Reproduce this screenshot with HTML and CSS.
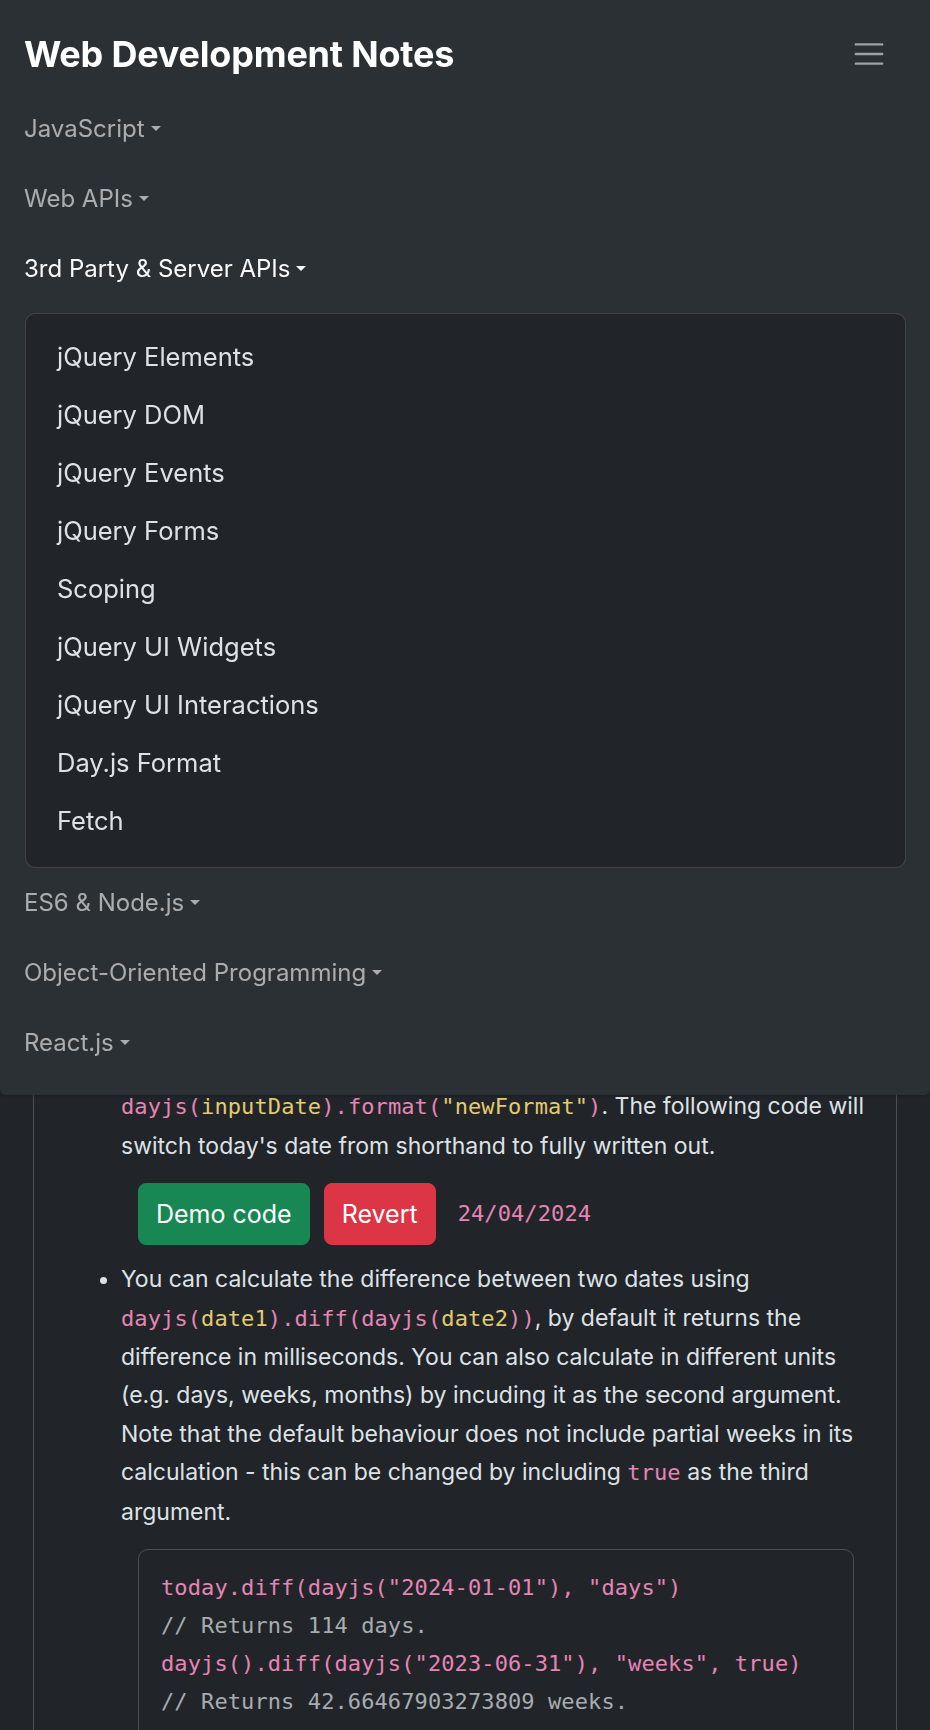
FILE: index.html
```html
<!DOCTYPE html>
<html lang="en">
<head>
<meta charset="utf-8">
<title>Web Development Notes</title>
<link rel="stylesheet" href="styles.css">
</head>
<body>
<nav class="navbar">
  <div class="brand-row">
    <a class="brand" href="#">Web Development Notes</a>
    <button class="toggler" type="button" aria-label="Toggle navigation">
      <svg width="36" height="36" viewBox="0 0 30 30" aria-hidden="true"><path d="M4 7h22M4 15h22M4 23h22" stroke="rgba(255,255,255,0.55)" stroke-width="2" stroke-linecap="round" fill="none"/></svg>
    </button>
  </div>
  <ul class="nav-list">
    <li><a class="nav-link" href="#">JavaScript<span class="caret"></span></a></li>
    <li><a class="nav-link" href="#">Web APIs<span class="caret"></span></a></li>
    <li class="open">
      <a class="nav-link active" href="#">3rd Party &amp; Server APIs<span class="caret"></span></a>
      <ul class="dropdown">
        <li><a class="dropdown-item" href="#">jQuery Elements</a></li>
        <li><a class="dropdown-item" href="#">jQuery DOM</a></li>
        <li><a class="dropdown-item" href="#">jQuery Events</a></li>
        <li><a class="dropdown-item" href="#">jQuery Forms</a></li>
        <li><a class="dropdown-item" href="#">Scoping</a></li>
        <li><a class="dropdown-item" href="#">jQuery UI Widgets</a></li>
        <li><a class="dropdown-item" href="#">jQuery UI Interactions</a></li>
        <li><a class="dropdown-item" href="#">Day.js Format</a></li>
        <li><a class="dropdown-item" href="#">Fetch</a></li>
      </ul>
    </li>
    <li><a class="nav-link" href="#">ES6 &amp; Node.js<span class="caret"></span></a></li>
    <li><a class="nav-link" href="#">Object-Oriented Programming<span class="caret"></span></a></li>
    <li><a class="nav-link" href="#">React.js<span class="caret"></span></a></li>
  </ul>
</nav>

<main class="main">
  <section class="card">
    <ul class="notes">
      <li>You can change the format of a date by using
        <code class="c"><span class="p">dayjs(</span><span class="y">inputDate</span><span class="p">).format(</span><span class="y">"newFormat"</span><span class="p">)</span></code>. The following code will switch today's date from shorthand to fully written out.
        <div class="demo-row">
          <button class="btn btn-green" type="button">Demo code</button>
          <button class="btn btn-red" type="button">Revert</button>
          <span class="c date">24/04/2024</span>
        </div>
      </li>
      <li>You can calculate the difference between two dates using
        <code class="c"><span class="p">dayjs(</span><span class="y">date1</span><span class="p">).diff(dayjs(</span><span class="y">date2</span><span class="p">))</span></code>, by default it returns the difference in milliseconds. You can also calculate in different units (e.g. days, weeks, months) by incuding it as the second argument. Note that the default behaviour does not include partial weeks in its calculation - this can be changed by including <code class="c p">true</code> as the third argument.
        <pre class="code-block"><code><span class="p">today.diff(dayjs("2024-01-01"), "days")</span>
<span class="cm">// Returns 114 days.</span>
<span class="p">dayjs().diff(dayjs("2023-06-31"), "weeks", true)</span>
<span class="cm">// Returns 42.66467903273809 weeks.</span></code></pre>
      </li>
    </ul>
  </section>
</main>
</body>
</html>
```

FILE: styles.css
```css
* { box-sizing: border-box; }

html, body {
  margin: 0;
  padding: 0;
}

body {
  background: #212529;
  color: #dee2e6;
  font-family: Inter, "Noto Sans", "Liberation Sans", sans-serif;
  font-size: 23px;
  line-height: 38.4px;
  overflow: hidden;
}

a { text-decoration: none; }

/* ---------- navbar ---------- */
.navbar {
  position: fixed;
  top: 0;
  left: 0;
  right: 0;
  z-index: 10;
  background: #2b3035;
  border-radius: 0 0 6px 6px;
  padding: 14px 24px 17px 24px;
  box-shadow: 0 1px 3px rgba(0, 0, 0, 0.2);
}

.brand-row {
  display: flex;
  align-items: center;
  justify-content: space-between;
  height: 80px;
}

.brand {
  color: #fff;
  font-size: 36px;
  font-weight: 700;
  letter-spacing: -0.2px;
  line-height: 48px;
}

.toggler {
  background: transparent;
  border: 1px solid transparent;
  padding: 0 18px 0 0;
  margin: 0;
  display: flex;
  align-items: center;
  cursor: pointer;
}

.toggler svg { display: block; }

.nav-list {
  list-style: none;
  margin: 0;
  padding: 0;
}

.nav-link {
  display: block;
  height: 70px;
  line-height: 70px;
  font-size: 24px;
  color: rgba(255, 255, 255, 0.6);
}

.nav-link.active { color: #f8f9fa; }

.caret {
  display: inline-block;
  margin-left: 6px;
  vertical-align: 0.24em;
  border-top: 5.5px solid currentColor;
  border-left: 5.5px solid transparent;
  border-right: 5.5px solid transparent;
}

.dropdown {
  list-style: none;
  margin: 9px 0 0 1px;
  padding: 14px 0 17px;
  background: #212529;
  border: 1px solid rgba(255, 255, 255, 0.15);
  border-radius: 10px;
}

.dropdown-item {
  display: block;
  height: 58px;
  line-height: 58px;
  padding: 0 31px;
  font-size: 25.5px;
  color: #dee2e6;
}

/* ---------- content ---------- */
.main {
  padding: 1031px 33px 0;
}

.card {
  border: 1px solid #495057;
  border-radius: 10px;
  padding: 17px 24px 24px;
}

.notes {
  margin: 0;
  padding-left: 63px;
}

.notes > li { padding-right: 4px; }

.c {
  font-family: "DejaVu Sans Mono", "Liberation Mono", monospace;
  font-size: 22px;
  letter-spacing: 0.1px;
}

.p { color: #e685b5; }
.y { color: #e3cb6e; }
.cm { color: #a7acb1; }

.demo-row {
  display: flex;
  align-items: center;
  gap: 14px;
  margin: 18px 0 15px 17px;
}

.btn {
  font-family: Inter, "Noto Sans", "Liberation Sans", sans-serif;
  font-size: 25px;
  line-height: 36px;
  padding: 12px 17px;
  color: #fff;
  border: 1px solid transparent;
  border-radius: 8px;
  cursor: pointer;
}

.btn-green { background: #198754; border-color: #198754; }
.btn-red { background: #dc3545; border-color: #dc3545; }

.date {
  color: #e685b5;
  margin-left: 8px;
}

.code-block {
  margin: 18px 14px 0 17px;
  padding: 19px 22px;
  border: 1px solid #495057;
  border-radius: 10px;
  font-family: "DejaVu Sans Mono", "Liberation Mono", monospace;
  font-size: 22px;
  line-height: 38px;
  letter-spacing: 0.1px;
  white-space: pre;
}

.code-block code { font-family: inherit; }
```
